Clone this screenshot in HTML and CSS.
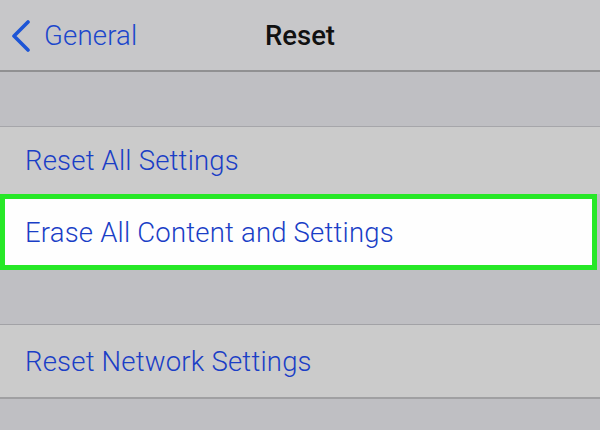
FILE: index.html
```html
<!DOCTYPE html>
<html>
<head>
<meta charset="utf-8">
<link rel="stylesheet" href="styles.css">
</head>
<body>
<div class="screen">
  <header class="nav">
    <div class="back">
      <svg class="chev" width="22" height="32" viewBox="0 0 22 32"><path d="M18 2 L4 16 L18 30" fill="none" stroke="#1d55d6" stroke-width="3.6" stroke-linecap="round" stroke-linejoin="round"/></svg>
      <span class="back-label">General</span>
    </div>
    <div class="title">Reset</div>
  </header>
  <div class="gap gap-top"></div>
  <div class="row row-first">Reset All Settings</div>
  <div class="row row-hl">Erase All Content and Settings</div>
  <div class="gap gap-mid"></div>
  <div class="row row-last">Reset Network Settings</div>
  <div class="rest"></div>
</div>
</body>
</html>
```
FILE: styles.css
```css
html, body {
  margin: 0;
  padding: 0;
  background: #bfbfc3;
}
.screen {
  width: 600px;
  height: 430px;
  overflow: hidden;
  display: flex;
  flex-direction: column;
  font-family: Roboto, "Liberation Sans", sans-serif;
  background: #bfbfc3;
}
.nav {
  height: 70px;
  flex: none;
  background: #c7c7c9;
  border-bottom: 2px solid #909092;
  display: grid;
  grid-template-columns: 1fr auto 1fr;
  align-items: center;
  box-sizing: content-box;
}
.back {
  display: flex;
  align-items: center;
  padding-left: 10px;
  gap: 12px;
}
.chev {
  display: block;
  margin-top: 2px;
}
.back-label {
  color: #1b46cc;
  font-size: 27.5px;
  font-weight: 300;
  letter-spacing: 0.2px;
}
.title {
  color: #111;
  font-size: 27.5px;
  font-weight: 500;
}
.gap {
  flex: none;
  background: #bfbfc3;
}
.gap-top {
  height: 54px;
  border-bottom: 1px solid #a6a6aa;
}
.row {
  flex: none;
  display: flex;
  align-items: center;
  padding-left: 25px;
  color: #1a3ec6;
  font-size: 27.5px;
  font-weight: 300;
  letter-spacing: 0.2px;
  background: #cbcbcb;
  box-sizing: border-box;
}
.row-first {
  height: 67px;
}
.row-hl {
  height: 76px;
  width: 597px;
  background: #fefefe;
  border: 5px solid #27e827;
  padding-left: 20px;
}
.gap-mid {
  height: 54px;
  border-bottom: 1px solid #a2a2a6;
}
.row-last {
  height: 72px;
  border-bottom: 2px solid #a0a0a2;
  box-sizing: content-box;
}
.rest {
  flex: 1;
  background: #bfbfc3;
}
```
